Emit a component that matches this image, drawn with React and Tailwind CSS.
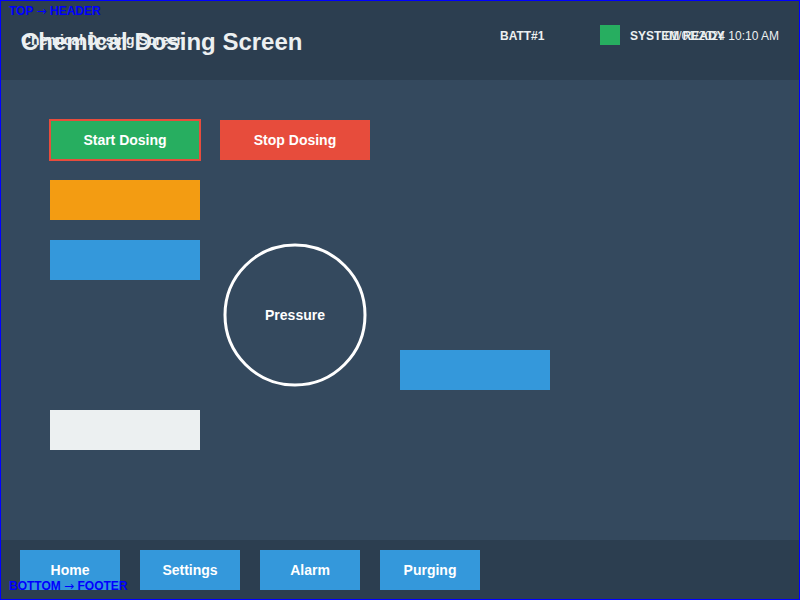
import React from "react";

const font = { fontFamily: '"Liberation Sans", Arial, sans-serif' };

const Arrow = () => (
  <span className="font-normal" style={{ fontFamily: '"DejaVu Sans", sans-serif' }}>→</span>
);

const NavButton = ({ label }) => (
  <button className="w-[100px] h-10 bg-[#3498db] text-white text-sm font-bold leading-none flex items-center justify-center">
    {label}
  </button>
);

const App = () => {
  return (
    <div className="relative w-[800px] h-[600px] overflow-hidden bg-[#34495e]" style={font}>
      {/* Header */}
      <header className="relative h-20 bg-[#2c3e50] flex items-start pl-[21px] text-[#ecf0f1]">
        <div className="grid w-[479px]">
          <h1 className="[grid-area:1/1] mt-[30px] text-2xl leading-none font-bold text-[#ecf0f1]">
            Chemical Dosing Screen
          </h1>
          <span className="[grid-area:1/1] mt-[33px] text-sm leading-none font-bold text-[#ecf0f1]">
            Chemical Dosing Screen
          </span>
        </div>
        <span className="w-[100px] mt-[30px] text-xs leading-none font-bold">BATT#1</span>
        <span className="w-5 h-5 mt-[25px] bg-[#27ae60]" />
        <span className="ml-[10px] mt-[30px] text-xs leading-none font-bold">SYSTEM READY</span>
        <span className="absolute right-[21px] top-[30px] text-xs leading-none text-[#ecf0f1]">
          01/01/2024 10:10 AM
        </span>
      </header>

      {/* Main canvas */}
      <main className="h-[460px] flex pl-[50px] pt-10">
        <div className="w-[150px] flex flex-col gap-5">
          <button className="self-start w-[152px] h-[42px] -ml-px -my-px bg-[#27ae60] border-2 border-[#e74c3c] text-white text-sm font-bold leading-none">
            Start Dosing
          </button>
          <div className="h-10 bg-[#f39c12]" />
          <div className="h-10 bg-[#3498db]" />
          <div className="h-10 mt-[110px] bg-[#ecf0f1]" />
        </div>

        <div className="w-[150px] ml-5 flex flex-col">
          <button className="h-10 bg-[#e74c3c] text-white text-sm font-bold leading-none">
            Stop Dosing
          </button>
          <div className="relative w-[150px] h-[150px] mt-20">
            <svg width="150" height="150" viewBox="0 0 150 150">
              <circle cx="75" cy="75" r="70" fill="none" stroke="#ffffff" strokeWidth="3" />
            </svg>
            <span className="absolute inset-0 flex items-center justify-center text-white text-sm font-bold leading-none">
              Pressure
            </span>
          </div>
        </div>

        <div className="w-[150px] ml-[30px] h-10 mt-[230px] bg-[#3498db]" />
      </main>

      {/* Footer */}
      <footer className="h-[60px] bg-[#2c3e50] flex gap-5 pl-5 pt-[10px]">
        <NavButton label="Home" />
        <NavButton label="Settings" />
        <NavButton label="Alarm" />
        <NavButton label="Purging" />
      </footer>

      {/* Debug region labels */}
      <span className="absolute left-[9px] top-[5px] text-xs leading-none font-bold text-[#0000ff]">
        TOP <Arrow /> HEADER
      </span>
      <span className="absolute left-[9px] top-[580px] text-xs leading-none font-bold text-[#0000ff]">
        BOTTOM <Arrow /> FOOTER
      </span>
      <div className="absolute inset-0 border border-[#0000ff] pointer-events-none" />
    </div>
  );
};

export default App;
